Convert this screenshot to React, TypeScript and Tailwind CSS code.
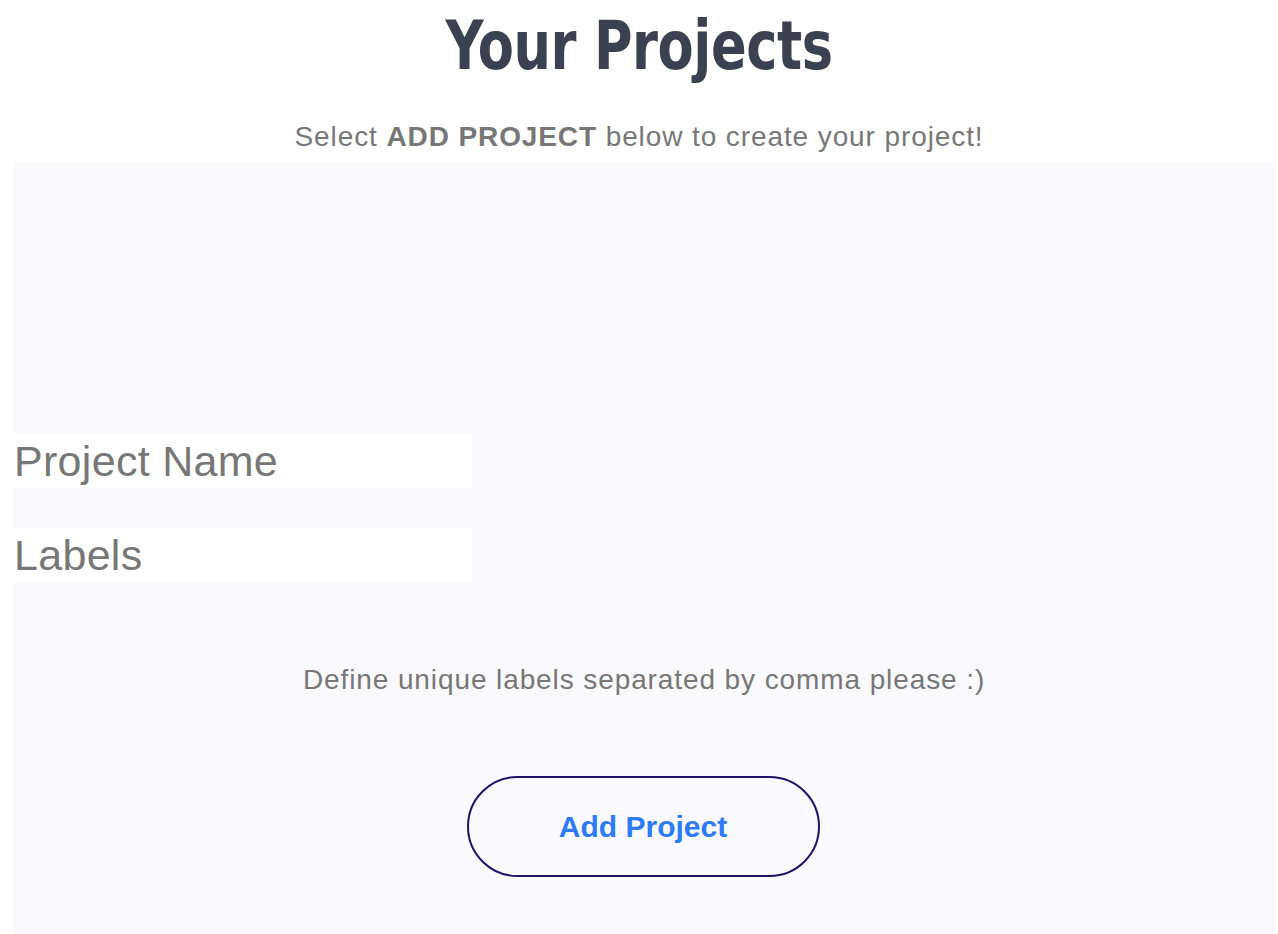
export default function App() {
  return (
    <div className="min-h-[934px] bg-white" style={{ fontFamily: '"Liberation Sans", Arial, sans-serif' }}>
      <div className="flex h-[162px] flex-col items-center">
        <h1
          className="mt-[6px] text-[#3b4150] text-[68px] leading-[80px] font-bold tracking-[-0.5px] scale-x-[0.86]"
          style={{ fontFamily: '"DejaVu Sans Condensed", "DejaVu Sans", sans-serif' }}
        >
          Your Projects
        </h1>
        <p className="mt-[35px] text-[28px] leading-[32px] tracking-[0.9px] text-[#777777]">
          Select <b className="font-bold">ADD PROJECT</b> below to create your project!
        </p>
      </div>
      <div className="ml-[14px] w-[1260px] h-[772px] bg-[#f9f9ff] flex flex-col">
        <div className="mt-[272px] w-[458px] h-[54px] bg-white text-[43px] leading-[54px] tracking-[0.3px] text-[#777777]">
          Project Name
        </div>
        <div className="mt-[40px] w-[458px] h-[54px] bg-white text-[43px] leading-[54px] tracking-[0.3px] text-[#777777]">
          Labels
        </div>
        <p className="mt-[82px] text-center text-[28px] leading-[32px] tracking-[0.9px] text-[#777777]">
          Define unique labels separated by comma please :)
        </p>
        <div className="mt-[80px] flex justify-center">
          <button className="ml-[-2px] w-[353px] h-[101px] rounded-full border-2 border-[#1e1466] text-[30px] font-bold text-[#2f7bf5]">
            Add Project
          </button>
        </div>
      </div>
    </div>
  );
}
